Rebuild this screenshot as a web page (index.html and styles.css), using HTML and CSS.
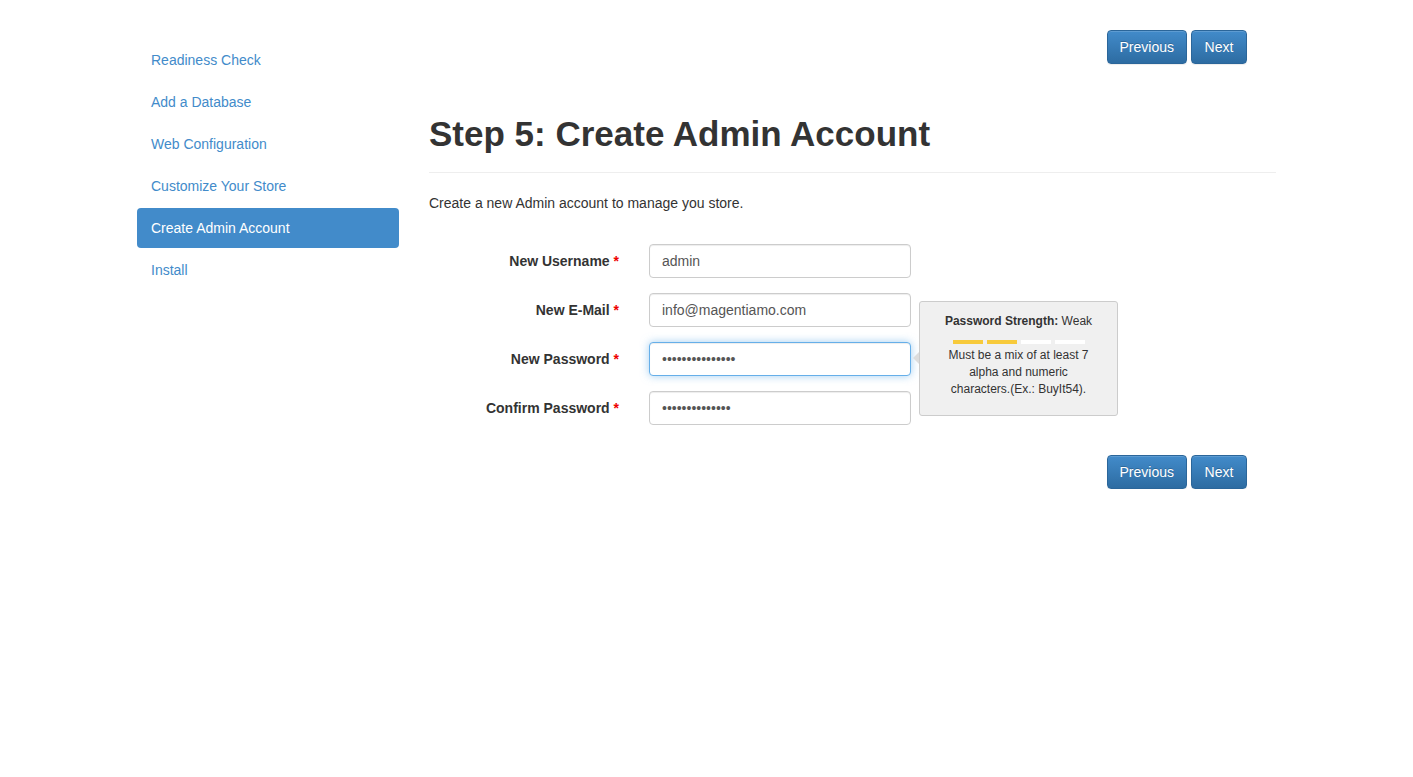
FILE: index.html
```html
<!DOCTYPE html>
<html lang="en">
	<head>
		<meta charset="utf-8"/>
		<title>Create Admin Account</title>
		<link rel="stylesheet" href="styles.css">
	</head>
	<body>
		<div class="page">
			<ul class="steps">
				<li><a href="#">Readiness Check</a></li>
				<li><a href="#">Add a Database</a></li>
				<li><a href="#">Web Configuration</a></li>
				<li><a href="#">Customize Your Store</a></li>
				<li class="active"><a href="#">Create Admin Account</a></li>
				<li><a href="#">Install</a></li>
			</ul>
			<div class="main">
				<div class="nav-buttons">
					<button class="btn">Previous</button>
					<button class="btn">Next</button>
				</div>
				<h1 class="page-header">Step 5: Create Admin Account</h1>
				<p class="intro">Create a new Admin account to manage you store.</p>
				<form class="admin-form">
					<div class="row">
						<label>New Username <span class="req">*</span></label>
						<input type="text" value="admin">
					</div>
					<div class="row">
						<label>New E-Mail <span class="req">*</span></label>
						<input type="text" value="info@magentiamo.com">
					</div>
					<div class="row pass-row">
						<label>New Password <span class="req">*</span></label>
						<input type="password" class="focus" value="abcdefghijklmno">
						<div class="tip">
							<p class="tip-title"><b>Password Strength:</b> Weak</p>
							<div class="meter">
								<span class="on"></span><span class="on"></span><span></span><span></span>
							</div>
							<p>Must be a mix of at least 7 alpha and numeric characters.(Ex.: BuyIt54).</p>
						</div>
					</div>
					<div class="row">
						<label>Confirm Password <span class="req">*</span></label>
						<input type="password" value="abcdefghijklmn">
					</div>
				</form>
				<div class="nav-buttons bottom">
					<button class="btn">Previous</button>
					<button class="btn next">Next</button>
				</div>
			</div>
		</div>
	</body>
</html>
```

FILE: styles.css
```css
body{
	font-family: "Liberation Sans", Arial, sans-serif;
	font-size: 14px;
	color: #333;
	margin: 0;
	padding: 0;
	background: #fff;
}

.page{
	display: flex;
	gap: 30px;
	padding: 30px 0 0 137px;
}

.steps{
	list-style: none;
	margin: 10px 0 0;
	padding: 0;
	width: 262px;
	flex: none;
}

.steps li{
	margin-bottom: 2px;
}

.steps a{
	display: block;
	padding: 0 14px;
	line-height: 40px;
	color: #428bca;
	text-decoration: none;
	border-radius: 4px;
}

.steps .active a{
	background: #428bca;
	color: #fff;
}

.main{
	width: 847px;
}

.nav-buttons{
	display: flex;
	justify-content: flex-end;
	gap: 4px;
	padding-right: 29px;
}

.nav-buttons.bottom{
	margin-top: 30px;
}

.btn{
	font-family: inherit;
	font-size: 14px;
	color: #fff;
	height: 34px;
	min-width: 56px;
	padding: 0 12px;
	border: 1px solid #2b669a;
	border-radius: 4px;
	background: linear-gradient(to bottom, #428bca 0%, #2d6ca2 100%);
	box-shadow: inset 0 1px 0 rgba(255,255,255,.15), 0 1px 1px rgba(0,0,0,.075);
	text-shadow: 0 -1px 0 rgba(0,0,0,.2);
	cursor: pointer;
}

.page-header{
	font-size: 35px;
	font-weight: bold;
	margin: 51px 0 0;
	padding-bottom: 18px;
	line-height: 1.1;
	border-bottom: 1px solid #eee;
	color: #333;
}

.intro{
	margin: 22px 0 0;
}

.admin-form{
	margin-top: 33px;
}

.row{
	display: flex;
	align-items: flex-start;
	margin-bottom: 15px;
}

.row label{
	width: 190px;
	padding-right: 15px;
	text-align: right;
	font-weight: bold;
	line-height: 34px;
	flex: none;
}

.req{
	color: #e00;
}

.row input{
	width: 262px;
	height: 34px;
	box-sizing: border-box;
	padding: 6px 12px;
	font-family: inherit;
	font-size: 14px;
	color: #555;
	border: 1px solid #ccc;
	border-radius: 4px;
	box-shadow: inset 0 1px 1px rgba(0,0,0,.075);
	outline: none;
	flex: none;
	margin: 0 0 0 15px;
}

.row input.focus{
	border-color: #66afe9;
	box-shadow: inset 0 1px 1px rgba(0,0,0,.075), 0 0 8px rgba(102,175,233,.6);
}

.pass-row{
	position: relative;
}

.tip{
	position: absolute;
	left: 490px;
	top: -41px;
	width: 199px;
	height: 115px;
	box-sizing: border-box;
	padding: 11px 20px;
	background: #f0f0f0;
	border: 1px solid #ccc;
	border-radius: 3px;
	text-align: center;
	font-size: 12px;
	line-height: 17px;
}

.tip::before{
	content: "";
	position: absolute;
	left: -7px;
	top: 50px;
	border: 6px solid transparent;
	border-right-color: #ddd;
	border-left: 0;
}

.tip p{
	margin: 0;
}

.meter{
	display: flex;
	justify-content: center;
	gap: 4px;
	margin: 10px 0 3px;
}

.meter span{
	width: 30px;
	height: 4px;
	background: #fff;
}

.meter span.on{
	background: #f7ca3b;
}
```
